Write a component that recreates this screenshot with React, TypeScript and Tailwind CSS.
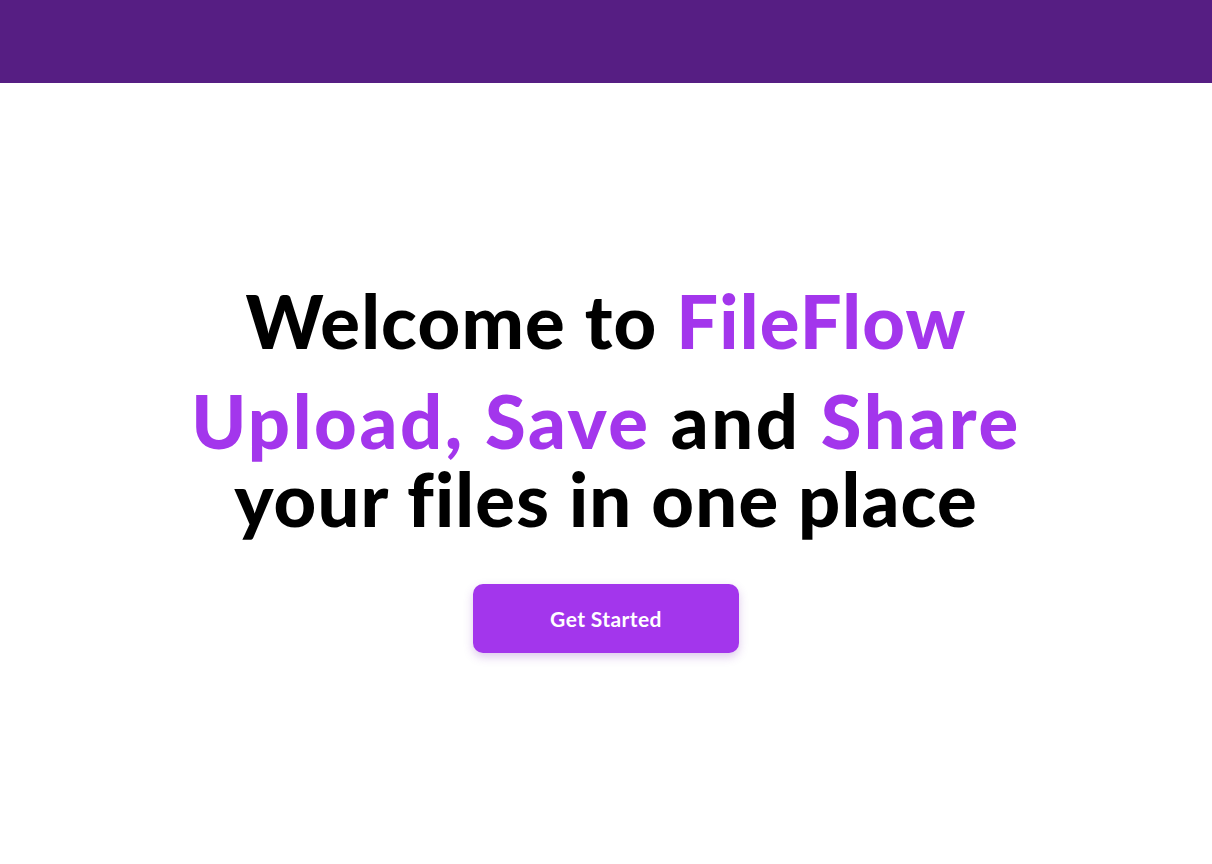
export default function App() {
  return (
    <div className="min-h-screen flex flex-col bg-white" style={{ fontFamily: "Lato, 'Noto Sans', sans-serif" }}>
      <header className="h-[83px] w-full bg-[#561e83]" />
      <main className="flex flex-col items-center pt-[201px] text-center">
        <h1 className="text-[74px] leading-none font-black text-black tracking-[1.2px]">
          Welcome to <span className="text-[#a336ec]">FileFlow</span>
        </h1>
        <h2 className="mt-[24px] flex flex-col items-center text-[74px] leading-[78px] font-black text-black">
          <span className="block tracking-[2.6px]">
            <span className="text-[#a336ec]">Upload, Save</span> and{" "}
            <span className="text-[#a336ec]">Share</span>
          </span>
          <span className="block tracking-[1.2px]">your files in one place</span>
        </h2>
        <button className="mt-[46px] h-[69px] w-[266px] rounded-[10px] bg-[#a336ec] text-[21px] font-bold tracking-[0.4px] text-white shadow-[0_4px_10px_rgba(120,40,180,0.25)]">
          Get Started
        </button>
      </main>
    </div>
  );
}
